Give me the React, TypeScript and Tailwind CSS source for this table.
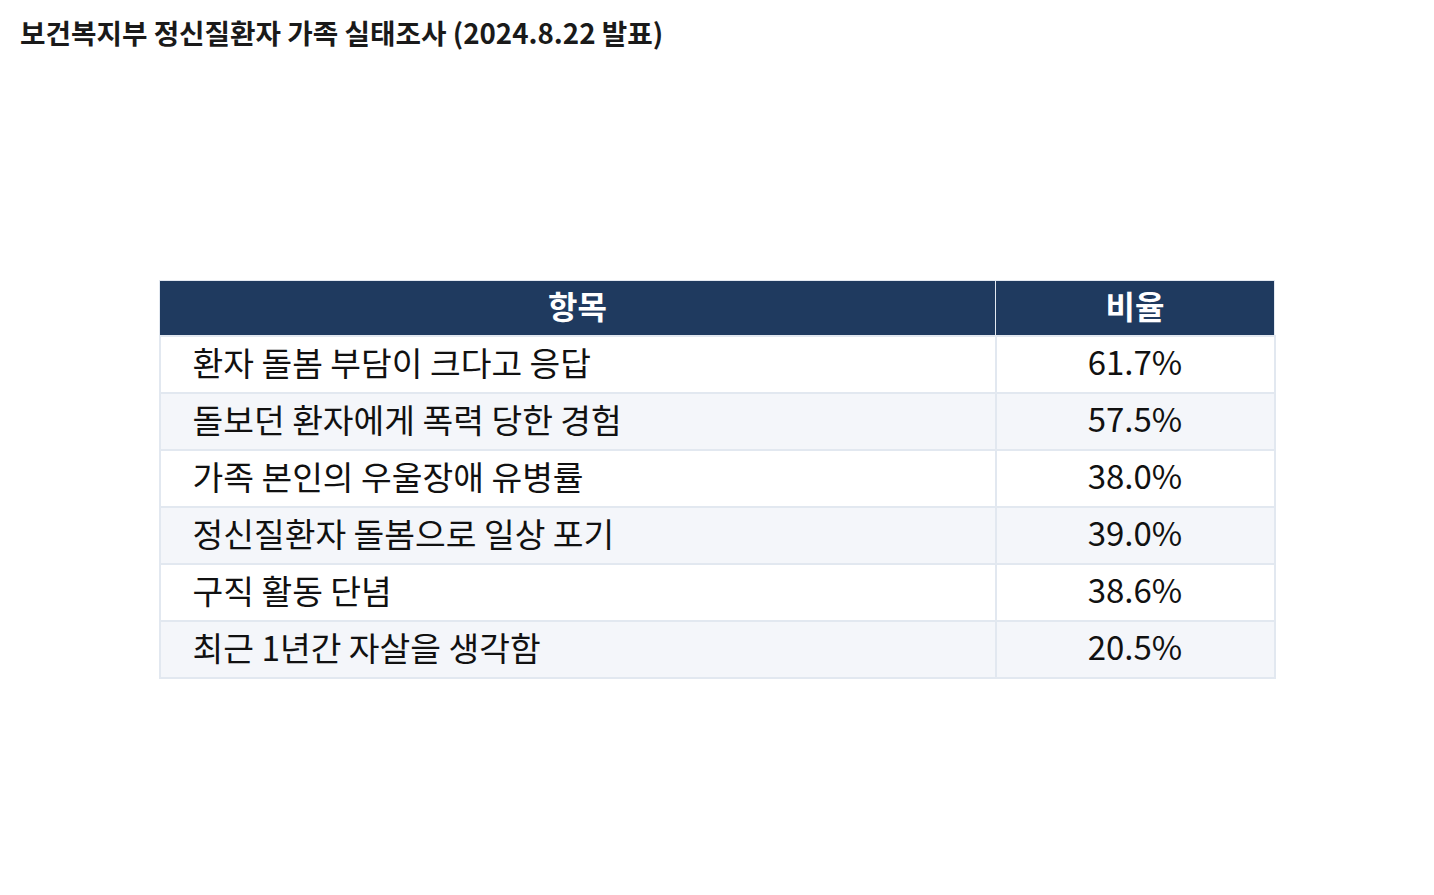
const rows = [
  { label: "환자 돌봄 부담이 크다고 응답", value: "61.7%" },
  { label: "돌보던 환자에게 폭력 당한 경험", value: "57.5%" },
  { label: "가족 본인의 우울장애 유병률", value: "38.0%" },
  { label: "정신질환자 돌봄으로 일상 포기", value: "39.0%" },
  { label: "구직 활동 단념", value: "38.6%" },
  { label: "최근 1년간 자살을 생각함", value: "20.5%" },
];

export default function App() {
  return (
    <div className="flex h-screen flex-col bg-white font-['Noto_Sans_CJK_KR','Noto_Sans',sans-serif] text-[#111]">
      {/* Title */}
      <div className="h-[64px] shrink-0 px-5 pt-[14px]">
        <h1 className="text-[27.7px] font-bold leading-[36px] text-[#1a1a1a]">
          보건복지부 정신질환자 가족 실태조사 (2024.8.22 발표)
        </h1>
      </div>

      {/* Table */}
      <div className="flex flex-1 items-center justify-center">
        <table className="w-[1117px] border-collapse">
          <thead>
            <tr className="bg-[#1f3a5f] text-white">
              <th className="h-[55px] w-[836px] border border-[#e2e8f0] pb-[6px] text-center text-[32px] font-bold leading-none">
                항목
              </th>
              <th className="h-[55px] border border-[#e2e8f0] pb-[6px] text-center text-[32px] font-bold leading-none">
                비율
              </th>
            </tr>
          </thead>
          <tbody>
            {rows.map((row, i) => (
              <tr key={row.label} className={i % 2 === 1 ? "bg-[#f4f6fa]" : "bg-white"}>
                <td className="h-[57px] border-2 border-[#e2e8f0] pb-[6px] pl-8 text-[33.4px] leading-none">
                  {row.label}
                </td>
                <td className="h-[57px] border-2 border-[#e2e8f0] pb-[6px] text-center text-[33px] leading-none">
                  {row.value}
                </td>
              </tr>
            ))}
          </tbody>
        </table>
      </div>
    </div>
  );
}
